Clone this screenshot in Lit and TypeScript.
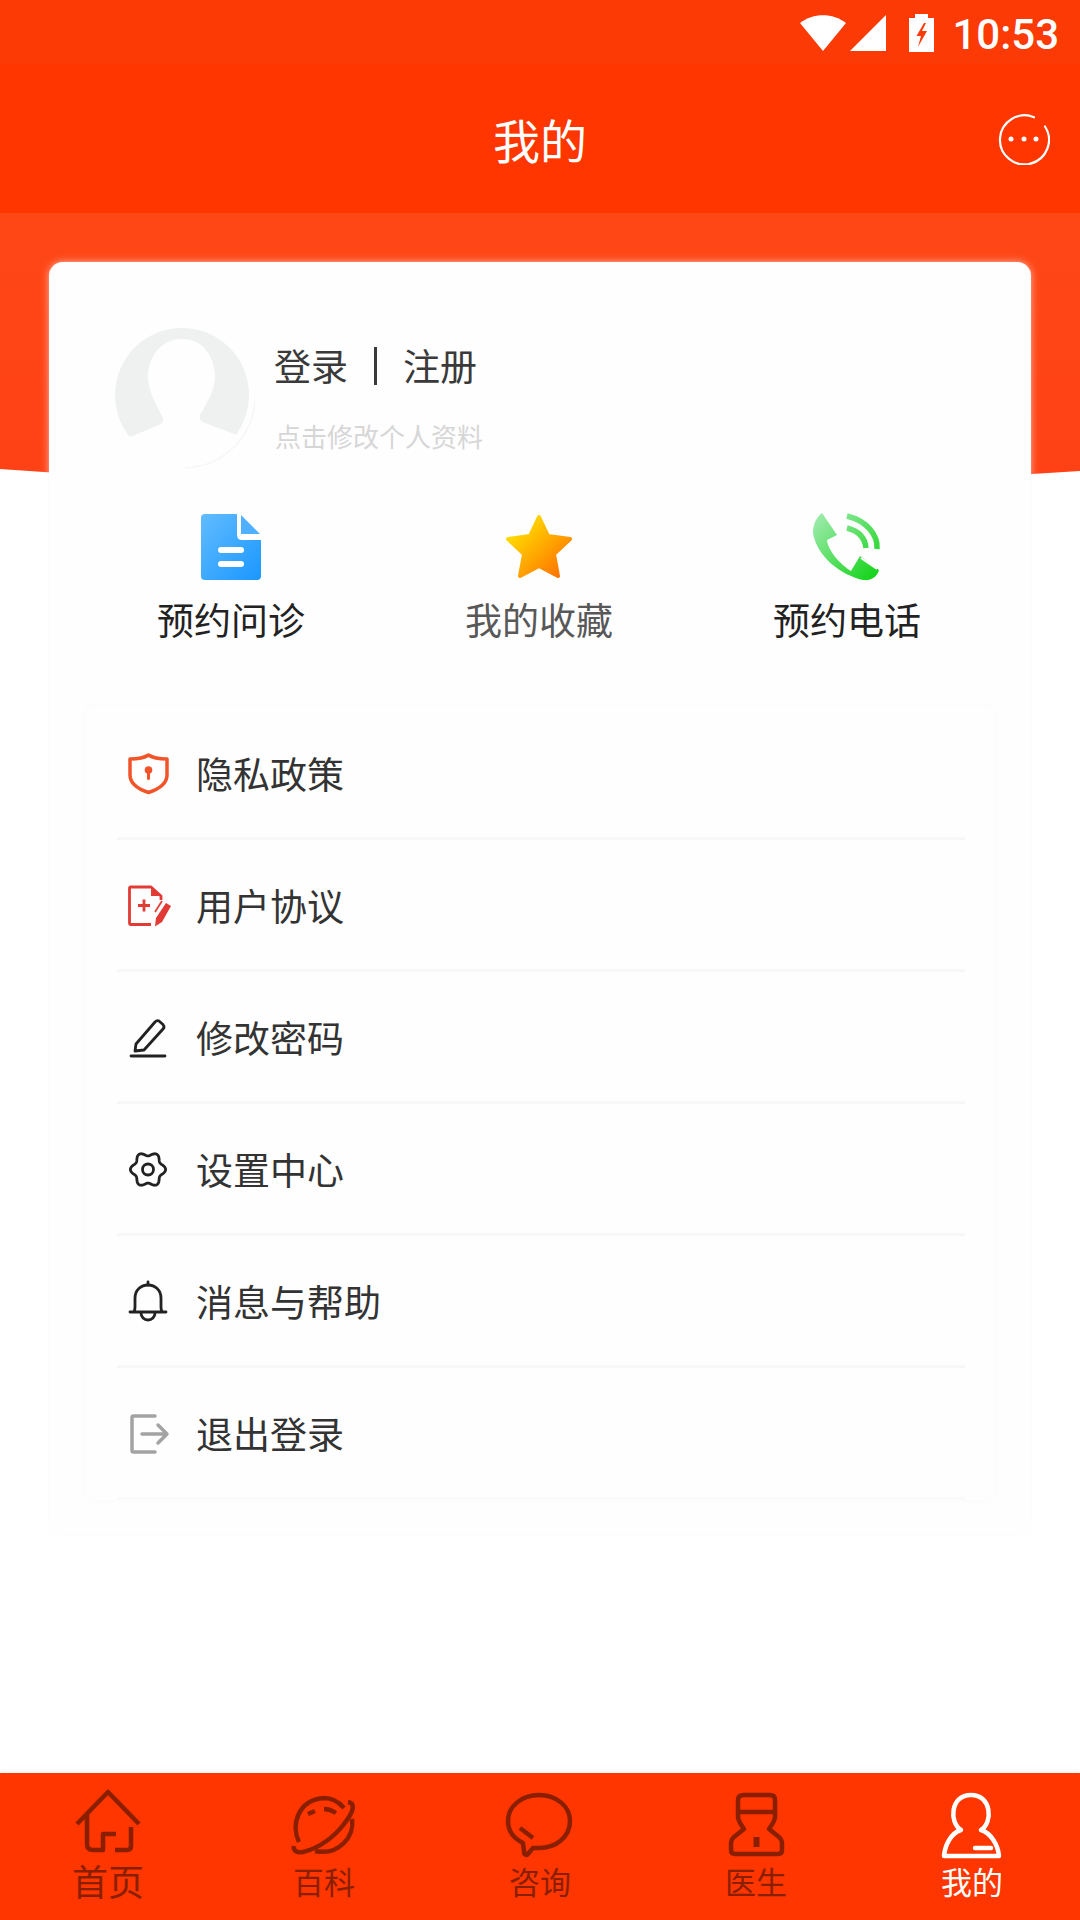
import { LitElement, html, svg, css } from 'lit';
import { customElement } from 'lit/decorators.js';

// six lobed cog outline for the settings row
const gearPath = () => {
  const pts: string[] = [];
  for (let i = 0; i < 120; i++) {
    const a = (i / 120) * Math.PI * 2;
    const r = 15.6 + 2 * Math.cos(6 * a);
    pts.push(`${(20 + r * Math.cos(a)).toFixed(2)} ${(20.5 + r * Math.sin(a)).toFixed(2)}`);
  }
  return `M${pts.join('L')}Z`;
};

const icons = {
  shield: svg`<path d="M20.500 2C25 5 33 6 39 6V22C39 30 31 36 20.500 39.500C10 36 2 30 2 22V6C8 6 16 5 20.500 2Z" fill="none" stroke="#f2542a" stroke-width="3.500" stroke-linejoin="round"/><circle cx="20.500" cy="17" r="3.800" fill="#f2542a"/><rect x="19" y="18" width="3" height="9" rx="1.500" fill="#f2542a"/>`,
  agreement: svg`<path d="M23 39.500H3Q1.500 39.500 1.500 38V3.500Q1.500 2 3 2H23L33 11V15" fill="none" stroke="#e23a34" stroke-width="2.800" stroke-linejoin="round"/><path d="M23 2V11H33Z" fill="#e23a34"/><path d="M10 20.500H22M16 14.500V26.500" stroke="#e23a34" stroke-width="2.800" fill="none"/><path d="M38 18L43 21L34 37L27 41.500L28 33Z" fill="#e23a34"/><path d="M27 27L34 16" stroke="#e23a34" stroke-width="1.700" fill="none"/>`,
  pencil: svg`<path d="M8 27L27 5Q29 3 31 4L35 7.500Q37 10 35 12L16 33L7 34Z" fill="none" stroke="#222" stroke-width="2.800" stroke-linejoin="round"/><path d="M3 39H37" stroke="#222" stroke-width="2.800" stroke-linecap="round"/>`,
  gear: svg`<path d="${gearPath()}" fill="none" stroke="#222" stroke-width="2.800" stroke-linejoin="round"/><circle cx="20" cy="20.500" r="5.500" fill="none" stroke="#222" stroke-width="2.800"/>`,
  bell: svg`<path d="M2 31H38M6 31Q7 29 7 26V17C7 9 13 4 20 4C27 4 33 9 33 17V26Q33 29 34 31" fill="none" stroke="#222" stroke-width="2.800" stroke-linecap="round"/><path d="M20 1V4" stroke="#222" stroke-width="2.800" stroke-linecap="round"/><path d="M13 32A7 7 0 0 0 27 32" fill="none" stroke="#222" stroke-width="2.800"/>`,
  logout: svg`<path d="M27 3H5.500Q4 3 4 4.500V37.500Q4 39 5.500 39H27" fill="none" stroke="#a3a3a3" stroke-width="3.500" stroke-linecap="round"/><path d="M14 21H39M30 12L39 21L30 30" fill="none" stroke="#a3a3a3" stroke-width="3.500" stroke-linecap="round" stroke-linejoin="round"/>`,
};

const navIcons = {
  home: svg`<path d="M4 39L35 7L66 39M14 29V59Q14 65 20 65H30V49H43M42 65H54Q58 65 58 61V42" />`,
  wiki: svg`<path d="M10 57C2 41 8 15 35 13C44 13 50 17 55 23M63 34C66 51 50 71 26 66M59 17C66 18 66 25 55 39C46 51 31 63 14 67C8 68 4 66 5 61M19 29L26 26M35 24C40 24 44 26 47 28" />`,
  chat: svg`<path d="M18 58C8 53 3 45 3 36C3 21 17 10 34 10C51 10 65 21 65 36C65 52 51 63 34 63Q30 63 28 63L22 70Q19 70 19 66Z" /><path d="M15 43L28 53" />`,
  doctor: svg`<path d="M23 10H49Q54 10 54 15V32C54 36 50 41 48 44L58 52Q61 55 61 58V65Q61 69 57 69H14Q10 69 10 65V58Q10 55 13 52L23 44C21 41 17 36 17 32V15Q17 10 23 10ZM17 27H54" /><path d="M35.500 52V62" stroke-width="6" />`,
  me: svg`<path d="M24 45C12 38 13 10 34 10C55 10 56 38 44 45C54 48 61 60 62 71H7C8 60 14 48 24 45Z" /><path d="M38 63H54" stroke-linecap="round" />`,
};

const actions = [
  {
    label: '预约问诊',
    muted: false,
    icon: svg`<svg class="action-icon" width="60" height="66" viewBox="0 0 60 66"><defs><linearGradient id="docFill" x1="0" y1="0" x2="1" y2="1"><stop offset="0" stop-color="#62bcff"/><stop offset="1" stop-color="#1a97ff"/></linearGradient></defs><path d="M4 0H36V21Q36 26 41 26H60V62Q60 66 56 66H4Q0 66 0 62V4Q0 0 4 0Z" fill="url(#docFill)"/><path d="M40 1L59 20H40Z" fill="#4eb0fe"/><rect x="17" y="33" width="26" height="6" rx="3" fill="#fff"/><rect x="17" y="47" width="26" height="6" rx="3" fill="#fff"/></svg>`,
  },
  {
    label: '我的收藏',
    muted: true,
    icon: svg`<svg class="action-icon" width="68" height="66" viewBox="0 0 68 66"><defs><linearGradient id="starFill" gradientUnits="userSpaceOnUse" x1="8" y1="8" x2="58" y2="60"><stop offset="0" stop-color="#ffe600"/><stop offset="1" stop-color="#ff7200"/></linearGradient></defs><path d="M34 3L43 22L65 25L49 40L53 62L34 52L15 62L19 40L3 25L25 22Z" fill="url(#starFill)" stroke="url(#starFill)" stroke-width="4" stroke-linejoin="round"/></svg>`,
  },
  {
    label: '预约电话',
    muted: false,
    icon: svg`<svg class="action-icon" width="68" height="68" viewBox="0 0 68 68"><defs><linearGradient id="phoneFill" gradientUnits="userSpaceOnUse" x1="4" y1="6" x2="60" y2="64"><stop offset="0" stop-color="#9aeaa8"/><stop offset="1" stop-color="#17d41c"/></linearGradient></defs><path d="M9 0L24 22L14 27C15 38 28 52 38 58L47 43L66 57C64 64 58 68 50 67C28 62 4 44 0 20C0 10 4 4 9 0Z" fill="url(#phoneFill)"/><path d="M13 2L24 20M48 45L64 56" stroke="#fff" stroke-width="2" fill="none"/><path d="M34 3C54 8 65 22 64 36M34 15C46 18 52 25 53 35" stroke="url(#phoneFill)" stroke-width="5.500" fill="none"/></svg>`,
  },
];

const menu = [
  { label: '隐私政策', icon: icons.shield },
  { label: '用户协议', icon: icons.agreement },
  { label: '修改密码', icon: icons.pencil },
  { label: '设置中心', icon: icons.gear },
  { label: '消息与帮助', icon: icons.bell },
  { label: '退出登录', icon: icons.logout },
];

const tabs = [
  { label: '首页', icon: navIcons.home, big: true, active: false },
  { label: '百科', icon: navIcons.wiki, big: false, active: false },
  { label: '咨询', icon: navIcons.chat, big: false, active: false },
  { label: '医生', icon: navIcons.doctor, big: false, active: false },
  { label: '我的', icon: navIcons.me, big: false, active: true },
];

@customElement('app-root')
export class AppRoot extends LitElement {
  static styles = css`
    :host {
      display: block;
      width: 1080px;
      height: 1920px;
      font-family: 'Noto Sans CJK SC', 'Noto Sans', sans-serif;
      background: #fff;
    }

    .page {
      display: flex;
      flex-direction: column;
      height: 1920px;
      overflow: hidden;
    }

    /* Status bar */
    .status {
      display: flex;
      justify-content: flex-end;
      align-items: flex-start;
      height: 64px;
      padding: 14px 21px 0 0;
      box-sizing: border-box;
      background: #fb3a06;
      color: #fff;
    }

    .status svg {
      display: block;
      flex: none;
    }

    .wifi {
      margin: 1px 4px 0 0;
    }

    .signal {
      margin: 1px 23px 0 0;
    }

    .battery {
      margin-right: 18px;
    }

    .time {
      font-family: Roboto, sans-serif;
      font-size: 42px;
      font-weight: 500;
      line-height: 42px;
    }

    /* Title bar */
    .titlebar {
      display: grid;
      grid-template-columns: 1fr auto 1fr;
      align-items: center;
      height: 149px;
      background: #ff3600;
      color: #fff;
    }

    .titlebar h1 {
      grid-column: 2;
      margin: 0;
      font-size: 47px;
      font-weight: 400;
      line-height: 60px;
    }

    .more {
      justify-self: end;
      display: block;
      margin-right: 30px;
    }

    /* Body */
    .hero {
      position: relative;
      flex: 1;
      min-height: 0;
      padding: 49px 49px 0;
    }

    .band {
      position: absolute;
      left: 0;
      top: 0;
      display: block;
    }

    .card {
      position: relative;
      height: 1273px;
      box-sizing: border-box;
      padding: 58px 36px 0;
      background: #fefefe;
      border-radius: 14px 14px 10px 10px;
      box-shadow: 0 0 9px rgba(255, 255, 255, 0.55), 0 0 3px rgba(225, 225, 240, 0.2);
    }

    .profile {
      display: flex;
      gap: 19px;
      height: 145px;
      margin-left: 25px;
    }

    .avatar {
      display: block;
      flex: none;
    }

    .names {
      padding-top: 27px;
    }

    .login {
      display: flex;
      align-items: center;
      height: 38px;
      font-size: 37px;
      line-height: 38px;
      color: #3a3a3a;
    }

    .login span {
      margin-bottom: 3px;
    }

    .login i {
      width: 3px;
      height: 38px;
      margin: 0 26px;
      background: #3a3a3a;
    }

    .hint {
      margin: 36px 0 0 1px;
      font-size: 26px;
      line-height: 30px;
      color: #d6d6d6;
    }

    .actions {
      display: grid;
      grid-template-columns: repeat(3, 308px);
      margin: 48px 0 0 -8px;
    }

    .action {
      display: flex;
      flex-direction: column;
      align-items: center;
    }

    .action-box {
      display: flex;
      justify-content: center;
      align-items: center;
      height: 68px;
    }

    .action-label {
      margin-top: 18px;
      font-size: 37px;
      line-height: 40px;
      color: #222;
    }

    .action-label.muted {
      color: #585858;
    }

    .menu {
      margin-top: 67px;
      padding: 2px 30px 0 32px;
      border-radius: 12px;
      box-shadow: 0 0 5px rgba(235, 225, 240, 0.18);
    }

    .row {
      display: flex;
      align-items: center;
      gap: 28px;
      height: 129px;
      padding-left: 11px;
      border-bottom: 3px solid #f8f8f8;
      font-size: 37px;
      color: #333;
    }

    .row:last-child {
      border-bottom-color: #fbf9fc;
    }

    .row svg {
      display: block;
      flex: none;
      overflow: visible;
    }

    /* Tab bar */
    .tabs {
      display: grid;
      grid-template-columns: repeat(5, 216px);
      flex: none;
      height: 147px;
      padding-top: 12px;
      box-sizing: border-box;
      background: #ff3600;
      box-shadow: 0 -3px 5px rgba(120, 120, 160, 0.06);
      position: relative;
    }

    .tab {
      display: flex;
      flex-direction: column;
      align-items: center;
      color: #8a1f00;
    }

    .tab.active {
      color: #fff;
    }

    .tab svg {
      display: block;
      fill: none;
      stroke: currentColor;
      stroke-width: 4.5;
      stroke-linejoin: round;
      overflow: visible;
    }

    .tab span {
      margin-top: 8px;
      font-size: 31px;
      line-height: 36px;
    }

    .tab.big span {
      margin-top: 7px;
      font-size: 36px;
    }
  `;

  render() {
    return html`
      <div class="page">
        <div class="status">
          <svg class="wifi" width="46" height="36" viewBox="0 0 46 36"><path d="M0 8C13 -2.500 33 -2.500 46 8L23 36Z" fill="#fff"/></svg>
          <svg class="signal" width="36" height="36" viewBox="0 0 36 36"><path d="M0 36L36 0V36Z" fill="#fff"/></svg>
          <svg class="battery" width="25" height="38" viewBox="0 0 25 38"><path d="M6 0H19V4H25V38H0V4H6Z" fill="#fff"/><path d="M15 9L7.500 22H12L9 33L18 17H13L17 9Z" fill="#fb3a06"/></svg>
          <span class="time">10:53</span>
        </div>

        <div class="titlebar">
          <h1>我的</h1>
          <svg class="more" width="52" height="52" viewBox="0 0 52 52">
            <path d="M36 4.300A24.500 24.500 0 1 0 47 13.500" fill="none" stroke="#fff" stroke-width="2.200" stroke-linecap="round"/>
            <circle cx="13" cy="26" r="2.500" fill="#fff"/><circle cx="26" cy="26" r="2.500" fill="#fff"/><circle cx="38" cy="26" r="2.500" fill="#fff"/>
          </svg>
        </div>

        <div class="hero">
          <svg class="band" width="1080" height="262" viewBox="0 0 1080 262"><defs><linearGradient id="bandFill" x1="0" y1="0" x2="0" y2="1"><stop offset="0" stop-color="#ff4716"/><stop offset="1" stop-color="#ff4115"/></linearGradient></defs><path d="M0 0H1080V258Q800 276 540 276Q280 276 0 256Z" fill="url(#bandFill)"/></svg>
          <div class="card">
            <div class="profile">
              <svg class="avatar" width="145" height="150" viewBox="0 0 145 150">
                <circle cx="72" cy="75" r="67" fill="#eff1f0"/>
                <path d="M72 19C50 19 38 38 38 57C38 72 48 88 53 98Q54 103 49 105L20 117L20 150L127 150L127 115L95 103Q88 100 90 95C97 83 105 70 105 57C105 38 94 19 72 19Z" fill="#fefefe"/>
                <path d="M145 70A72 72 0 0 1 75 148" fill="none" stroke="#f6f6f6" stroke-width="1.500"/>
              </svg>
              <div class="names">
                <div class="login"><span>登录</span><i></i><span>注册</span></div>
                <div class="hint">点击修改个人资料</div>
              </div>
            </div>

            <div class="actions">
              ${actions.map(a => html`
                <div class="action">
                  <div class="action-box">${a.icon}</div>
                  <div class="action-label ${a.muted ? 'muted' : ''}">${a.label}</div>
                </div>
              `)}
            </div>

            <div class="menu">
              ${menu.map(m => html`
                <div class="row">
                  <svg width="40" height="40" viewBox="0 0 40 40">${m.icon}</svg>
                  <span>${m.label}</span>
                </div>
              `)}
            </div>
          </div>
        </div>

        <div class="tabs">
          ${tabs.map(t => html`
            <div class="tab ${t.big ? 'big' : ''} ${t.active ? 'active' : ''}">
              <svg width="70" height="70" viewBox="0 0 70 70">${t.icon}</svg>
              <span>${t.label}</span>
            </div>
          `)}
        </div>
      </div>
    `;
  }
}

declare global {
  interface HTMLElementTagNameMap {
    'app-root': AppRoot;
  }
}
